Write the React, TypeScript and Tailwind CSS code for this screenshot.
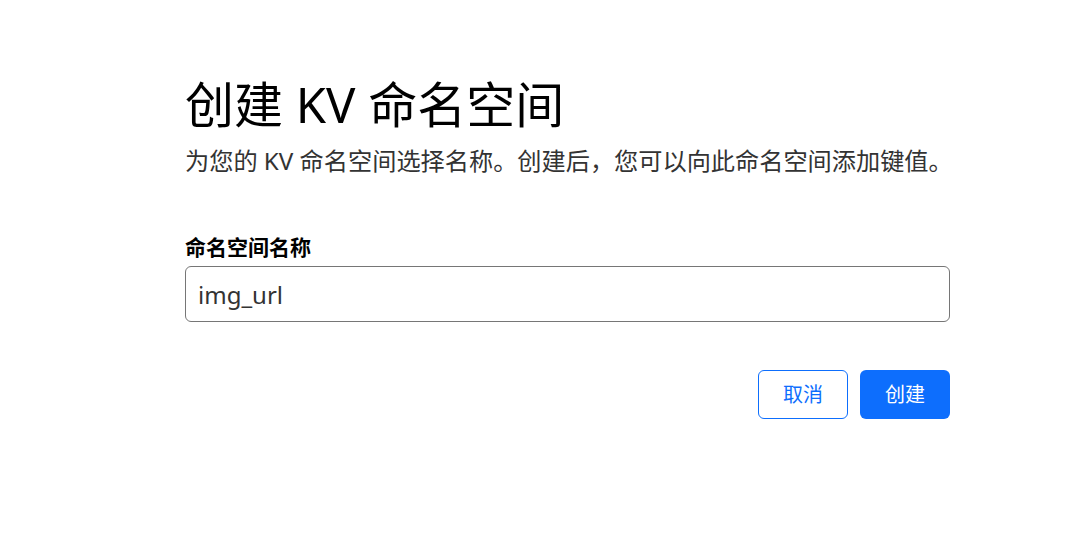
import { useState } from 'react';

export default function App() {
  const [name, setName] = useState('img_url');

  return (
    <div
      className="min-h-screen bg-white text-[#212529]"
      style={{ fontFamily: '"Noto Sans", "Noto Sans CJK SC", sans-serif' }}
    >
      <div className="ml-[185px] w-[765px] pt-[75px]">
        <h1 className="text-[49px] leading-[1.2] font-normal text-black">创建 KV 命名空间</h1>
        <p className="mt-[9px] whitespace-nowrap text-[24.2px] leading-[1.5] text-[#333]">
          为您的 KV 命名空间选择名称。创建后，您可以向此命名空间添加键值。
        </p>

        <label className="mt-[53px] block text-[21px] leading-[1.43] font-bold text-black">
          命名空间名称
        </label>
        <input
          value={name}
          onChange={(e) => setName(e.target.value)}
          className="mt-[4px] block h-[56px] w-full rounded-[6px] border border-[#767676] px-[12px] text-[24px] text-[#333] outline-none"
        />

        <div className="mt-[48px] flex justify-end gap-[12px]">
          <button className="h-[49px] w-[90px] rounded-[6px] border border-[#0d6efd] bg-white text-[20px] text-[#0d6efd]">
            取消
          </button>
          <button className="h-[49px] w-[90px] rounded-[6px] bg-[#0d6efd] text-[20px] text-white">
            创建
          </button>
        </div>
      </div>
    </div>
  );
}
